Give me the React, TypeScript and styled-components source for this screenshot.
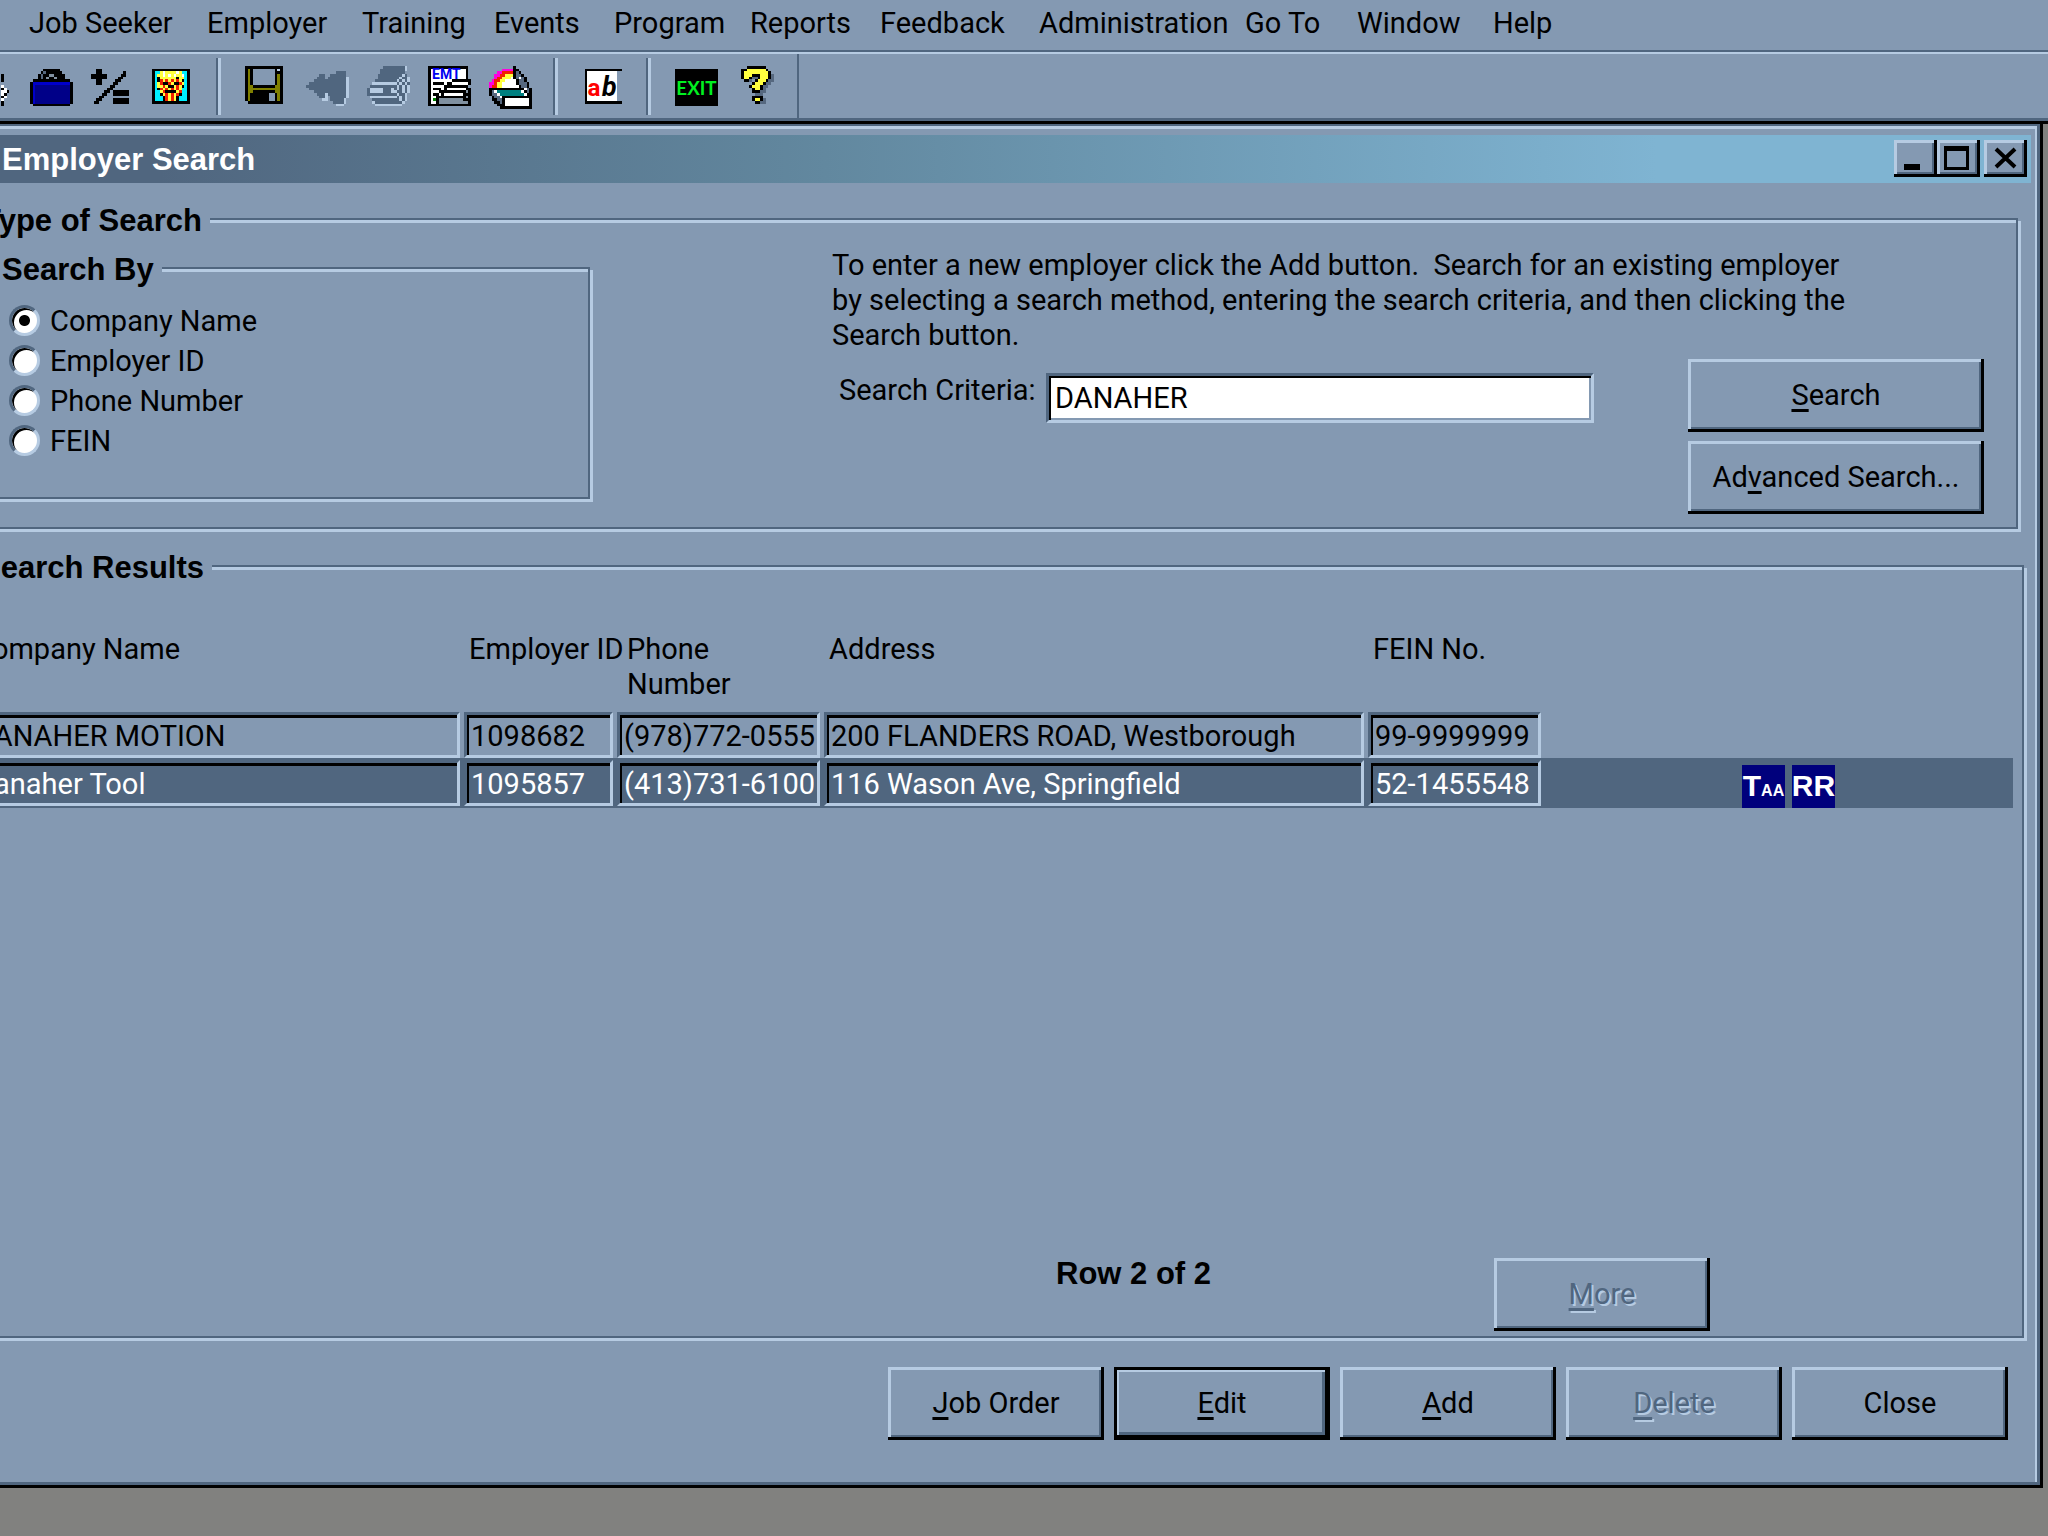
import React from "react";
import styled, { createGlobalStyle, css } from "styled-components";

const color = {
  face: "#8499b2",
  light: "#b6cbe2",
  shadow: "#50667f",
  ink: "#000000",
  desk: "#81817f",
};

const raised = css`
  box-shadow: inset -3px -3px 0 ${color.ink}, inset 3px 3px 0 ${color.light},
    inset -5px -5px 0 ${color.shadow};
`;

const GlobalStyle = createGlobalStyle`
  * { box-sizing: border-box; }
  body { margin: 0; background: ${color.desk}; }
  body, button, input {
    font-family: Roboto, "Liberation Sans", sans-serif;
    font-size: 29px;
    line-height: 35px;
    color: ${color.ink};
  }
`;

const Screen = styled.div`
  min-height: 100vh;
  display: flex;
  flex-direction: column;
  overflow: hidden;
`;

/* ---------- menu ---------- */

const MenuBar = styled.nav`
  display: flex;
  padding: 6px 0 9px 29px;
  background: ${color.face};
  border-bottom: 2px solid ${color.shadow};
`;

const MenuItem = styled.button<{ $width: number }>`
  flex: 0 0 ${(p) => p.$width}px;
  padding: 0;
  border: 0;
  background: none;
  text-align: left;
  white-space: nowrap;
`;

const menus: [string, number][] = [
  ["Job Seeker", 178],
  ["Employer", 155],
  ["Training", 132],
  ["Events", 120],
  ["Program", 136],
  ["Reports", 130],
  ["Feedback", 159],
  ["Administration", 206],
  ["Go To", 112],
  ["Window", 136],
  ["Help", 80],
];

/* ---------- toolbar ---------- */

const ToolBar = styled.div`
  display: flex;
  gap: 18px;
  height: 72px;
  background: ${color.face};
  border-top: 2px solid ${color.light};
  border-bottom: 3px solid ${color.ink};
  box-shadow: inset 0 -3px 0 ${color.shadow};
  padding-bottom: 3px;
`;

const ToolButton = styled.button<{ $first?: boolean }>`
  flex: none;
  width: 43px;
  height: 43px;
  margin: 12px 0 0 ${(p) => (p.$first ? "-31px" : "0")};
  padding: 0;
  border: 0;
  background: none;
`;

const Divider = styled.span`
  width: 5px;
  margin: 4px 6px 3px 3px;
  border-left: 2px solid ${color.shadow};
  border-right: 3px solid ${color.light};
`;

const ToolBarEnd = styled.span`
  width: 2px;
  background: ${color.shadow};
`;

const palette: Record<string, string> = {
  K: "#000000",
  W: "#ffffff",
  O: "#808000",
  B: "#0000c8",
  N: "#000088",
  C: "#00f0ff",
  R: "#f02000",
  Y: "#ffff40",
  M: "#ff00e0",
  S: "#56687f",
  T: "#008080",
  G: "#8090a0",
  E: "#008000",
  D: color.shadow,
  L: color.light,
};

const GlyphSvg = styled.svg`
  display: block;
  width: 43px;
  height: 43px;
`;

function PixelIcon({ rows, children }: { rows: string[]; children?: React.ReactNode }) {
  const runs: React.ReactNode[] = [];
  rows.forEach((row, y) => {
    let x = 0;
    while (x < row.length) {
      const ch = row[x];
      let end = x + 1;
      while (end < row.length && row[end] === ch) end++;
      if (palette[ch]) {
        runs.push(
          <rect key={`${x}-${y}`} x={x} y={y} width={end - x} height={1} fill={palette[ch]} />
        );
      }
      x = end;
    }
  });
  return (
    <GlyphSvg viewBox="0 0 16 16" aria-hidden="true">
      <g shapeRendering="crispEdges">{runs}</g>
      {children}
    </GlyphSvg>
  );
}

const art = {
  person: [
    "", "", "", "............K", "............K", "............K", "", "............W",
    "............KW", "............WWK", "............WK", "............KW", "............W",
    "............K", "............K",
  ],
  briefcase: [
    "",
    ".....KKKKKK.....",
    "....KSKKKKKK....",
    "...KSKKGGKKKK...",
    "...KSKGKKGKKK...",
    ".KKKKKKKKKKKKKK.",
    "KBBBBBBBBBBBBBBK",
    "KBNNNNNNNNNNNNNK",
    "KBNNNNNNNNNNNNNK",
    "KBNNNNNNNNNNNNNK",
    "KBNNNNNNNNNNNNNK",
    "KBNNNNNNNNNNNNNK",
    "KBNNNNNNNNNNNNNK",
    "KBNNNNNNNNNNNNNK",
    ".KKKKKKKKKKKKKK.",
  ],
  math: [
    "",
    "..KK",
    "..KK........K",
    "KKKKKK.....KK",
    "KKKKKK....KK",
    "..KK.....KK",
    "..KK....KK",
    ".......KK",
    "......KK",
    ".....KK.KKKKKK",
    "....KK..KKKKKK",
    "...KK",
    "..KK....KKKKKK",
    ".KK.....KKKKKK",
  ],
  portrait: [
    "",
    "KKKKKKKKKKKKKK",
    "KCCYWYYYYWYCCK",
    "KCYYWYWYWYYWCK",
    "KCKYYYYYYKYYCK",
    "KCKRYRYRYRYKCK",
    "KCYRKKRYKKRYCK",
    "KCYYRYKKYRYKCK",
    "KCKRYRYRYRYCCK",
    "KCCYRKKKKYRCCK",
    "KCCKYRYRYRKCCK",
    "KCCCKRYRYKCCCK",
    "KCCCKRYRYKCCCK",
    "KKKKKKKKKKKKKK",
  ],
  save: [
    "KKKKKKKKKKKKKK",
    "KOK........KLK",
    "KOK........KKK",
    "KOK........KOK",
    "KOK........KOK",
    "KOK........KOK",
    "KOK........KOK",
    "KOOKKKKKKKKOOK",
    "KOOOOOOOOOOOOK",
    "KOOKKKKKKKKOOK",
    "KOKKKKKKK..KOK",
    "KOKKKKKKK..KOK",
    "KOKKKKKKK..KOK",
    ".KKKKKKKKKKKKK",
  ],
  undo: [
    "",
    "",
    "...........DDDD.",
    ".....DD..DDDDDD.",
    "....DDD.DDDDDDDL",
    "...DDDDDDDDDDDDL",
    ".DDDDDDDDDDDDDDL",
    "DDDDDDDDDDDDDDDL",
    ".DDDDDDDDDDDDDDL",
    "...DDDDDDDDDDDDL",
    "....DDDLDDDDDDDL",
    ".....DDL.DDDDDDL",
    "......LL.DDDDDL.",
    "..........DDDDL.",
    "...........LLL..",
  ],
  print: [
    "......DDDDDDDDL.",
    ".....DDDDDDDDDL.",
    ".....DDDDDDDDD..",
    "....DDDDDDDDDLD.",
    "....DDDDDDDDLDDL",
    "...DDDDDDDDLDLDL",
    "..LLLLLLLLLDLDLD",
    ".DDDDDDDDDDLDLDL",
    "DLLLLLDDDLDLDLDL",
    "DLLLLLDDDLLDDLDL",
    "DDDDDDDDDDDLDDL.",
    ".LLLLLLLLLLDLDL.",
    "..DDDDDDDDDDLDL.",
    "..LDDDDDDDDDDL..",
    "...LLLLLLLLLL...",
  ],
  report: [
    "KKKKKKKKKKKKKKK.",
    "KWWWWWWWWWWWWWK.",
    "KWWWWWWWWWWWWWK.",
    "KWWWWWWWWWWWWWK.",
    "KWWWWWWWWWWWWWK.",
    "KWWWWWWWWKKKKKKK",
    "KWKKKKWKKWWWWWWK",
    "KWWWWWKKKKKKKKK.",
    "KWKKKWKWWWWWWWKK",
    "KWWWKKKKKKKKKKGK",
    "KWKKWKWWWWWWWKKK",
    "KWWKKKKKKKKKKKGK",
    "KWEKGGGGGGGGGKKK",
    "KWWKGGGGGGGGGGGK",
    "KKKKKKKKKKKKKKKK",
  ],
  scanner: [
    ".........K......",
    ".....MMMMKK.....",
    "...MMRRRRKSK....",
    "..MMRRYYYKSSK...",
    "..MRRYYYWKSWSK..",
    ".MRRYYWWWWKSSK..",
    "MMRYYWWWWWKSSSK.",
    "MRRYYWWWWWWKSSK.",
    "KKKKKKKKKKKKKWSK",
    "KSWTTTTTTTTTWKSK",
    "KSSWTTTTTTTTTWKK",
    ".KSSWKKKKKKKKKKK",
    ".KKSSKWWWWWWWWWK",
    "..KKSKWWWWWWWWWK",
    "...KKKWWWWWWWWWK",
    "....KKKKKKKKKKKK",
  ],
  spelling: [
    "",
    ".KKKKKKKKKKKKKK",
    ".KWWWWWWWWWWW",
    ".KWWWWWWWWWWW",
    ".KWWWWWWWWWWW",
    ".KWWWWWWWWWWW",
    ".KWWWWWWWWWWW",
    ".KWWWWWWWWWWW",
    ".KWWWWWWWWWWW",
    ".KWWWWWWWWWWW",
    ".KWWWWWWWWWWW",
    ".KWWWWWWWWWWW",
    ".KWWWWWWWWWWW",
    ".KKKKKKKKKKKKKK",
  ],
  exit: ["", ...Array(14).fill("KKKKKKKKKKKKKKKK")],
  help: [
    "....KKKKKKK...",
    "..KKYYYYYYYK..",
    "..KYYYYYYYYYK.",
    "..KYYYKKKYYYKS",
    "..KYYKSSKYYYKS",
    "...KKS.KYYYKSS",
    "......KYYYKSS.",
    ".....KYYYKSS..",
    "......KYYKS...",
    "......KKKSS...",
    ".......SSS....",
    "......KKKK....",
    "......KYYKS...",
    ".......KKSS...",
  ],
};

/* ---------- window frame ---------- */

const Window = styled.main`
  flex: 1;
  display: flex;
  flex-direction: column;
  margin: 0 5px 49px -48px;
  padding: 11px 0 45px;
  background: ${color.face};
  border-right: 3px solid ${color.ink};
  border-bottom: 3px solid ${color.ink};
  box-shadow: inset -3px -3px 0 ${color.shadow}, inset 0 2px 0 ${color.shadow},
    inset -5px 5px 0 ${color.light};
`;

const TitleBar = styled.header`
  display: flex;
  align-items: center;
  height: 48px;
  margin-right: 9px;
  padding: 0 4px 2px 50px;
  background: linear-gradient(90deg, #50667f 10%, #62889f 42%, #7fb4d2 82%);
`;

const Title = styled.h1`
  flex: 1;
  margin: 0;
  padding-top: 3px;
  font: bold 31px/36px "Liberation Sans", sans-serif;
  color: #fff;
`;

const FrameButton = styled.button<{ $apart?: boolean }>`
  width: 43px;
  height: 37px;
  margin-left: ${(p) => (p.$apart ? "4px" : "0")};
  padding: 0;
  border: 0;
  background: ${color.face};
  ${raised}
`;

const FrameGlyph = styled.svg`
  display: block;
  width: 43px;
  height: 37px;
`;

/* ---------- group boxes ---------- */

const GroupBox = styled.fieldset`
  margin: 0;
  padding: 0;
  min-width: 0;
  border: 2px solid ${color.shadow};
  box-shadow: inset 0 3px 0 ${color.light}, 3px 3px 0 ${color.light};
`;

const GroupTitle = styled.legend`
  margin-left: 12px;
  padding: 4px 8px 0 2px;
  background: ${color.face};
  font: bold 31px/36px "Liberation Sans", sans-serif;
`;

const TypeGroup = styled(GroupBox)`
  margin: 16px 22px 0 14px;
`;

const TypeLayout = styled.div`
  display: grid;
  grid-template-columns: 604px minmax(0, 1fr);
  column-gap: 242px;
  align-items: start;
  padding: 9px 32px 13px 18px;
`;

const RadioList = styled.div`
  padding: 12px 0 37px 21px;
`;

const RadioRow = styled.label`
  display: flex;
  align-items: center;
  gap: 10px;
  height: 40px;
  span {
    padding-top: 3px;
  }
`;

const Radio = styled.input`
  appearance: none;
  flex: none;
  width: 31px;
  height: 31px;
  margin: 0;
  border: 3px solid;
  border-color: ${color.shadow} ${color.light} ${color.light} ${color.shadow};
  border-radius: 50%;
  background: #fff;
  box-shadow: inset 2px 2px 0 ${color.ink};
  &:checked {
    background: radial-gradient(circle, #000 5px, #fff 6px);
  }
`;

const Instructions = styled.p`
  max-width: 1020px;
  margin: 0 0 6px;
  white-space: pre-wrap;
`;

const CriteriaRow = styled.div`
  display: flex;
  align-items: flex-start;
`;

const CriteriaLabel = styled.label`
  flex: 0 0 214px;
  margin-top: 14px;
  padding-left: 7px;
  white-space: nowrap;
`;

const CriteriaInput = styled.input`
  flex: 1;
  min-width: 0;
  height: 50px;
  margin-top: 14px;
  padding: 0 6px;
  border: 3px solid;
  border-color: ${color.shadow} ${color.light} ${color.light} ${color.shadow};
  border-radius: 0;
  background: #fff;
  box-shadow: inset 2px 2px 0 ${color.ink}, inset -2px -2px 0 ${color.face};
  outline: 0;
`;

const SideButtons = styled.div`
  flex: 0 0 296px;
  display: grid;
  gap: 9px;
  margin-left: 94px;
`;

const PushButton = styled.button<{ $primary?: boolean }>`
  min-width: 216px;
  height: 73px;
  padding: 0;
  border: 0;
  background: ${color.face};
  ${raised}
  ${(p) =>
    p.$primary &&
    css`
      box-shadow: inset 0 0 0 3px ${color.ink}, inset -5px -5px 0 ${color.ink},
        inset 5px 5px 0 ${color.light}, inset -8px -8px 0 ${color.shadow};
    `}
  &:disabled {
    color: ${color.shadow};
    text-shadow: 2px 2px 0 ${color.light};
  }
  u {
    text-decoration-thickness: 3px;
    text-underline-offset: 4px;
  }
`;

/* ---------- results ---------- */

const ResultsGroup = styled(GroupBox)`
  flex: 1;
  margin: 17px 16px 0 12px;
`;

const ResultsArea = styled.div`
  min-height: calc(100vh - 864px);
  padding: 46px 9px 0 2px;
`;

const ResultsTable = styled.table`
  width: 100%;
  border-collapse: collapse;
  table-layout: fixed;
`;

const Col = styled.col<{ $width?: number }>`
  width: ${(p) => (p.$width ? `${p.$width}px` : "auto")};
`;

const HeadCell = styled.th<{ $inset?: number }>`
  height: 78px;
  padding: 0 0 0 ${(p) => p.$inset ?? 5}px;
  font-weight: normal;
  text-align: left;
  vertical-align: top;
  white-space: nowrap;
`;

const Row = styled.tr<{ $selected?: boolean }>`
  background: ${(p) => (p.$selected ? color.shadow : "transparent")};
  color: ${(p) => (p.$selected ? "#fff" : color.ink)};
  td {
    padding: 2px 4px ${(p) => (p.$selected ? 2 : 0)}px 0;
  }
`;

const CellBox = styled.div`
  height: 46px;
  padding: 4px 0 0 4px;
  border: 3px solid;
  border-color: ${color.shadow} ${color.light} ${color.light} ${color.shadow};
  box-shadow: inset 2px 3px 0 ${color.ink};
  overflow: hidden;
  white-space: nowrap;
`;

const Flags = styled.div`
  display: flex;
  gap: 7px;
  height: 43px;
  margin: 5px 0 -2px 197px;
`;

const Flag = styled.abbr`
  display: flex;
  align-items: baseline;
  justify-content: center;
  width: 43px;
  height: 43px;
  background: #00007c;
  color: #fff;
  font: bold 30px/42px "Liberation Sans", sans-serif;
  text-decoration: none;
  small {
    font-size: 16px;
  }
`;

const ResultsFooter = styled.div`
  display: flex;
  justify-content: flex-end;
  align-items: flex-start;
  padding: 0 312px 5px 0;
`;

const RowCount = styled.p`
  flex: 0 0 438px;
  margin: 0;
  font: bold 31px/32px "Liberation Sans", sans-serif;
`;

const Actions = styled.footer`
  display: flex;
  justify-content: flex-end;
  gap: 10px;
  padding: 29px 32px 0 0;
`;

const searchModes = ["Company Name", "Employer ID", "Phone Number", "FEIN"];

const employers = [
  {
    name: "DANAHER MOTION",
    id: "1098682",
    phone: "(978)772-0555",
    address: "200 FLANDERS ROAD, Westborough",
    fein: "99-9999999",
  },
  {
    name: "Danaher Tool",
    id: "1095857",
    phone: "(413)731-6100",
    address: "116 Wason Ave, Springfield",
    fein: "52-1455548",
    selected: true,
  },
];

export default function App() {
  return (
    <Screen>
      <GlobalStyle />
      <MenuBar>
        {menus.map(([name, width]) => (
          <MenuItem key={name} $width={width}>
            {name}
          </MenuItem>
        ))}
      </MenuBar>

      <ToolBar>
        <ToolButton $first aria-label="Job seeker">
          <PixelIcon rows={art.person} />
        </ToolButton>
        <ToolButton aria-label="Employer">
          <PixelIcon rows={art.briefcase} />
        </ToolButton>
        <ToolButton aria-label="Calculate">
          <PixelIcon rows={art.math} />
        </ToolButton>
        <ToolButton aria-label="Staff">
          <PixelIcon rows={art.portrait} />
        </ToolButton>
        <Divider />
        <ToolButton aria-label="Save">
          <PixelIcon rows={art.save} />
        </ToolButton>
        <ToolButton aria-label="Undo" disabled>
          <PixelIcon rows={art.undo} />
        </ToolButton>
        <ToolButton aria-label="Print" disabled>
          <PixelIcon rows={art.print} />
        </ToolButton>
        <ToolButton aria-label="EMT report">
          <PixelIcon rows={art.report}>
            <text x="1.5" y="4.9" fontSize="5.2" fontWeight="bold" fill="#0000f0">
              EMT
            </text>
          </PixelIcon>
        </ToolButton>
        <ToolButton aria-label="Scan">
          <PixelIcon rows={art.scanner} />
        </ToolButton>
        <Divider />
        <ToolButton aria-label="Spelling">
          <PixelIcon rows={art.spelling}>
            <text x="2" y="11" fontSize="9" fontWeight="bold" fill="#ff0000">
              a
            </text>
            <text x="7.4" y="11" fontSize="10" fontStyle="italic" fontWeight="bold">
              b
            </text>
          </PixelIcon>
        </ToolButton>
        <Divider />
        <ToolButton aria-label="Exit">
          <PixelIcon rows={art.exit}>
            <text
              x="8"
              y="10.8"
              fontFamily="Lato, sans-serif"
              fontSize="7"
              fontWeight="bold"
              fill="#00f020"
              textAnchor="middle"
            >
              EXIT
            </text>
          </PixelIcon>
        </ToolButton>
        <ToolButton aria-label="Help">
          <PixelIcon rows={art.help} />
        </ToolButton>
        <ToolBarEnd />
      </ToolBar>

      <Window>
        <TitleBar>
          <Title>Employer Search</Title>
          <FrameButton aria-label="Minimize">
            <FrameGlyph viewBox="0 0 43 37">
              <rect x="10" y="24" width="16" height="6" />
            </FrameGlyph>
          </FrameButton>
          <FrameButton aria-label="Maximize">
            <FrameGlyph viewBox="0 0 43 37">
              <path d="M7 6h25v24H7zM10 11v16h19V11z" fillRule="evenodd" />
            </FrameGlyph>
          </FrameButton>
          <FrameButton $apart aria-label="Close window">
            <FrameGlyph viewBox="0 0 43 37">
              <path d="M12 9L31 27M31 9L12 27" stroke="#000" strokeWidth="4" />
            </FrameGlyph>
          </FrameButton>
        </TitleBar>

        <TypeGroup>
          <GroupTitle>Type of Search</GroupTitle>
          <TypeLayout>
            <GroupBox>
              <GroupTitle>Search By</GroupTitle>
              <RadioList>
                {searchModes.map((mode, i) => (
                  <RadioRow key={mode}>
                    <Radio type="radio" name="mode" defaultChecked={i === 0} />
                    <span>{mode}</span>
                  </RadioRow>
                ))}
              </RadioList>
            </GroupBox>
            <div>
              <Instructions>
                {
                  "To enter a new employer click the Add button.  Search for an existing employer by selecting a search method, entering the search criteria, and then clicking the Search button."
                }
              </Instructions>
              <CriteriaRow>
                <CriteriaLabel htmlFor="criteria">Search Criteria:</CriteriaLabel>
                <CriteriaInput id="criteria" defaultValue="DANAHER" />
                <SideButtons>
                  <PushButton>
                    <u>S</u>earch
                  </PushButton>
                  <PushButton>
                    Ad<u>v</u>anced Search...
                  </PushButton>
                </SideButtons>
              </CriteriaRow>
            </div>
          </TypeLayout>
        </TypeGroup>

        <ResultsGroup>
          <GroupTitle>Search Results</GroupTitle>
          <ResultsArea>
            <ResultsTable>
              <colgroup>
                <Col $width={496} />
                <Col $width={153} />
                <Col $width={207} />
                <Col $width={544} />
                <Col $width={177} />
                <Col />
              </colgroup>
              <thead>
                <tr>
                  <HeadCell>Company Name</HeadCell>
                  <HeadCell>Employer ID</HeadCell>
                  <HeadCell $inset={10}>
                    Phone
                    <br />
                    Number
                  </HeadCell>
                  <HeadCell>Address</HeadCell>
                  <HeadCell>FEIN No.</HeadCell>
                  <HeadCell aria-label="Flags" />
                </tr>
              </thead>
              <tbody>
                {employers.map((e) => (
                  <Row key={e.id} $selected={e.selected}>
                    {[e.name, e.id, e.phone, e.address, e.fein].map((value) => (
                      <td key={value}>
                        <CellBox>{value}</CellBox>
                      </td>
                    ))}
                    <td>
                      {e.selected && (
                        <Flags>
                          <Flag>
                            T<small>AA</small>
                          </Flag>
                          <Flag>RR</Flag>
                        </Flags>
                      )}
                    </td>
                  </Row>
                ))}
              </tbody>
            </ResultsTable>
          </ResultsArea>
          <ResultsFooter>
            <RowCount>Row 2 of 2</RowCount>
            <PushButton disabled>
              <u>M</u>ore
            </PushButton>
          </ResultsFooter>
        </ResultsGroup>

        <Actions>
          <PushButton>
            <u>J</u>ob Order
          </PushButton>
          <PushButton $primary>
            <u>E</u>dit
          </PushButton>
          <PushButton>
            <u>A</u>dd
          </PushButton>
          <PushButton disabled>
            <u>D</u>elete
          </PushButton>
          <PushButton>Close</PushButton>
        </Actions>
      </Window>
    </Screen>
  );
}
